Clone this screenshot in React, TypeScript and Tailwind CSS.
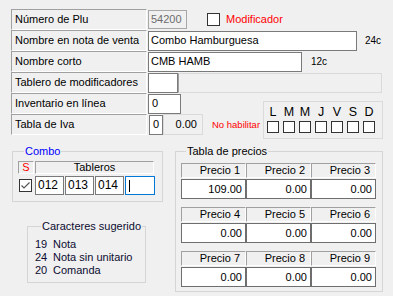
import React from 'react';

function Label({ children }: { children: React.ReactNode }) {
    return (
        <div className="w-[136px] h-[21px] shrink-0 flex items-center pl-[3px] border-t border-l border-b border-r border-t-[#a0a0a0] border-l-[#a0a0a0] border-b-white border-r-white">
            {children}
        </div>
    );
}

function Box({ className, children }: { className: string; children?: React.ReactNode }) {
    return (
        <div className={`h-[20px] shrink-0 flex items-center border border-[#7a7a7a] bg-white ${className}`}>
            {children}
        </div>
    );
}

function CheckBox({ checked = false }: { checked?: boolean }) {
    return (
        <div className="w-[13px] h-[13px] shrink-0 border border-[#333333] bg-white flex items-center justify-center">
            {checked && (
                <svg width="11" height="11" viewBox="0 0 11 11" fill="none">
                    <path d="M1.5 5.5L4 8L9.5 2.5" stroke="#555555" strokeWidth="1.2" />
                </svg>
            )}
        </div>
    );
}

const days = ['L', 'M', 'M', 'J', 'V', 'S', 'D'];

function PriceBlock({ start, values }: { start: number; values: string[] }) {
    return (
        <div className="flex flex-col gap-[1px]">
            <div className="flex">
                {values.map((_, i) => (
                    <div
                        key={i}
                        className="w-[65px] h-[15px] flex items-center justify-end pr-[5px] border-t border-l border-b border-r border-t-[#a0a0a0] border-l-[#a0a0a0] border-b-white border-r-white"
                    >
                        Precio {start + i}
                    </div>
                ))}
            </div>
            <div className="flex">
                {values.map((v, i) => (
                    <div
                        key={i}
                        className="w-[65px] h-[20px] flex items-center justify-end pr-[3px] bg-white border border-[#6e6e6e]"
                    >
                        {v}
                    </div>
                ))}
            </div>
        </div>
    );
}

export default function App() {
    return (
        <div className="w-[393px] h-[296px] overflow-hidden bg-[#f0f0f0] pt-[9px] pl-[11px] text-[11px] leading-[13px] text-black font-['Liberation_Sans',Arial,sans-serif]">
            {/* top form rows */}
            <div className="flex h-[21px] items-center">
                <Label>Número de Plu</Label>
                <div className="ml-[1px] w-[39px] h-[19px] flex items-center pl-[2px] border border-[#a8a8a8] text-[#6d6d6d]">
                    54200
                </div>
                <div className="ml-[20px]">
                    <CheckBox />
                </div>
                <span className="ml-[6px] text-[#ff0000]">Modificador</span>
            </div>

            <div className="flex h-[21px] items-center">
                <Label>Nombre en nota de venta</Label>
                <Box className="ml-[1px] w-[209px] pl-[2px]">Combo Hamburguesa</Box>
                <span className="ml-[8px] text-[10px]">24c</span>
            </div>

            <div className="flex h-[21px] items-center">
                <Label>Nombre corto</Label>
                <Box className="ml-[1px] w-[154px] pl-[2px]">CMB HAMB</Box>
                <span className="ml-[9px] text-[10px]">12c</span>
            </div>

            <div className="flex h-[21px] items-center">
                <Label>Tablero de modificadores</Label>
                <Box className="ml-[1px] w-[30px]" />
                <div className="w-[204px] h-[20px] border border-[#dadada] border-l-[#a0a0a0]" />
            </div>

            <div className="flex items-start">
                <div className="w-[252px] shrink-0 flex flex-col">
                    <div className="flex h-[21px] items-center">
                        <Label>Inventario en línea</Label>
                        <Box className="ml-[1px] w-[33px] pl-[3px]">0</Box>
                    </div>
                    <div className="flex h-[21px] items-center">
                        <Label>Tabla de Iva</Label>
                        <Box className="ml-[2px] w-[14px] pl-[3px]">0</Box>
                        <div className="w-[40px] h-[21px] flex items-center justify-end pr-[5px] border border-[#dadada]">
                            0.00
                        </div>
                        <span className="ml-[9px] text-[9.5px] text-[#ff0000]">No habilitar</span>
                    </div>
                </div>
                <div className="mt-[8px] w-[120px] h-[38px] border border-[#dadada] flex pl-[1px] pt-[3px]">
                    {days.map((d, i) => (
                        <div key={i} className="w-[16px] flex flex-col items-center">
                            <span className="text-[12.5px] leading-[14px]">{d}</span>
                            <div className="mt-[2px] w-[12px] h-[12px] border border-[#333333] bg-white" />
                        </div>
                    ))}
                </div>
            </div>

            {/* bottom section */}
            <div className="mt-[6px] flex items-start">
                <div className="flex flex-col">
                    <fieldset className="ml-[1px] w-[151px] border border-[#d5d5d5] px-[5px] pt-[3px] pb-[6px]">
                        <legend className="ml-[6px] px-[1px] text-[#0000ff]">Combo</legend>
                        <div className="flex gap-[1px] h-[13px]">
                            <div className="w-[16px] flex items-center justify-center text-[#ff0000] border-t border-l border-b border-r border-t-[#a0a0a0] border-l-[#a0a0a0] border-b-white border-r-white">
                                S
                            </div>
                            <div className="w-[119px] flex items-center justify-center border-t border-l border-b border-r border-t-[#a0a0a0] border-l-[#a0a0a0] border-b-white border-r-white">
                                Tableros
                            </div>
                        </div>
                        <div className="mt-[2px] flex items-center h-[19px]">
                            <div className="ml-[1px] w-[16px]">
                                <CheckBox checked />
                            </div>
                            <div className="flex gap-[1px]">
                                <div className="w-[29px] h-[19px] flex items-center pl-[2px] border border-[#7a7a7a] bg-white text-[12px]">012</div>
                                <div className="w-[29px] h-[19px] flex items-center pl-[2px] border border-[#7a7a7a] bg-white text-[12px]">013</div>
                                <div className="w-[29px] h-[19px] flex items-center pl-[2px] border border-[#7a7a7a] bg-white text-[12px]">014</div>
                                <div className="w-[30px] h-[19px] flex items-center pl-[3px] border border-[#0078d7] bg-white">
                                    <span className="w-[1px] h-[12px] bg-black" />
                                </div>
                            </div>
                        </div>
                    </fieldset>

                    <fieldset className="mt-[18px] ml-[16px] w-[119px] border border-[#d5d5d5] pl-[7px] pt-[5px] pb-[5px] text-[#0c0c30]">
                        <legend className="ml-[6px] px-[1px]">Caracteres sugerido</legend>
                        <div className="flex"><span className="w-[18px]">19</span><span>Nota</span></div>
                        <div className="flex"><span className="w-[18px]">24</span><span>Nota sin unitario</span></div>
                        <div className="flex"><span className="w-[18px]">20</span><span>Comanda</span></div>
                    </fieldset>
                </div>

                <fieldset className="ml-[12px] w-[208px] border border-[#d5d5d5] pl-[5px] pt-[5px] pb-[4px]">
                    <legend className="ml-[5px] px-[1px]">Tabla de precios</legend>
                    <div className="flex flex-col gap-[8px]">
                        <PriceBlock start={1} values={['109.00', '0.00', '0.00']} />
                        <PriceBlock start={4} values={['0.00', '0.00', '0.00']} />
                        <PriceBlock start={7} values={['0.00', '0.00', '0.00']} />
                    </div>
                </fieldset>
            </div>
        </div>
    );
}
